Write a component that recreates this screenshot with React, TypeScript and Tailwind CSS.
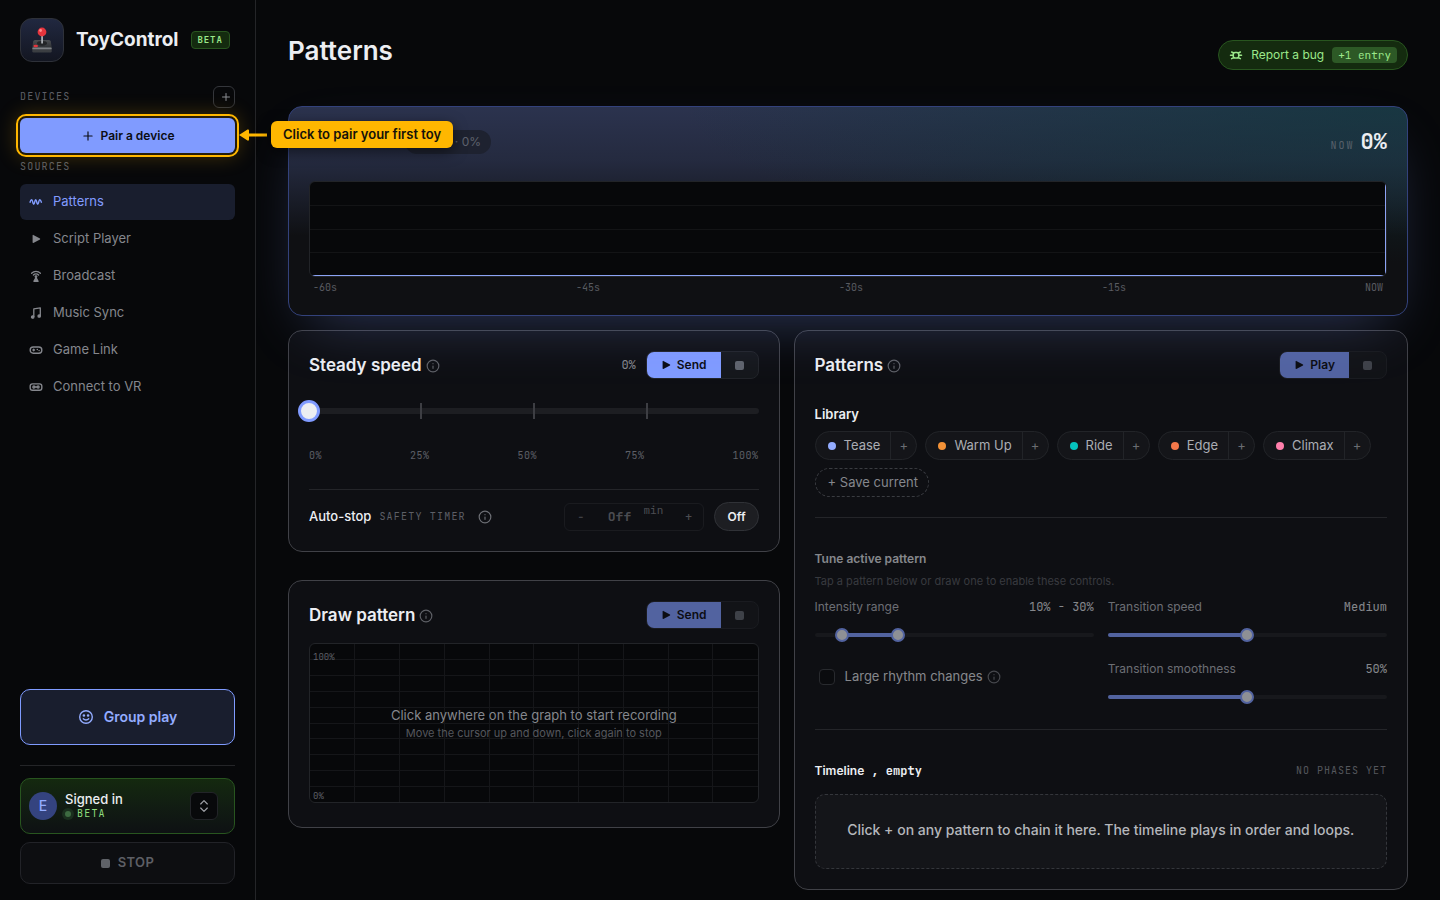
import { useState } from "react";
import type { ReactNode } from "react";
import { ChevronsUpDown, Info, Plus } from "lucide-react";
import clsx from "clsx";

const mono = "font-['JetBrains_Mono','DejaVu_Sans_Mono',monospace]";

function WaveIcon() {
  return (
    <svg viewBox="0 0 14 14" className="h-3.5 w-3.5" fill="none" stroke="currentColor" strokeWidth="1.4" strokeLinecap="round" strokeLinejoin="round">
      <path d="M1 7.200C1.500 5.600 2.100 4.800 2.700 4.800c1 0 1 4.400 2 4.400s1-4.400 2-4.400 1 4.400 2 4.400 1-4.400 2-4.400c.6 0 1.200.8 1.700 2.400" />
    </svg>
  );
}

function PlayIcon({ className }: { className?: string }) {
  return (
    <svg viewBox="0 0 14 14" className={clsx("h-3.5 w-3.5", className)} fill="currentColor">
      <path d="M3.600 3.300c0-.4.400-.600.700-.4l6.700 3.700c.3.200.3.600 0 .8l-6.700 3.600c-.3.200-.7 0-.7-.4z" />
    </svg>
  );
}

function BroadcastIcon() {
  return (
    <svg viewBox="0 0 14 14" className="h-3.5 w-3.5" fill="none" stroke="currentColor" strokeWidth="1.300" strokeLinecap="round" strokeLinejoin="round">
      <path d="M2.600 4.200a6.200 6.200 0 0 1 8.800 0M4.400 6a3.700 3.700 0 0 1 5.200 0" />
      <circle cx="7" cy="7.600" r=".8" fill="currentColor" />
      <path d="M7 8.500 4.900 12.300h4.200zM6 11h2" />
    </svg>
  );
}

function MusicIcon() {
  return (
    <svg viewBox="0 0 14 14" className="h-3.5 w-3.5" fill="none" stroke="currentColor" strokeWidth="1.300" strokeLinejoin="round">
      <path d="M4.800 11V2.900l6.500-1v8" />
      <circle cx="3.700" cy="11" r="1.200" fill="currentColor" />
      <circle cx="10.200" cy="10" r="1.200" fill="currentColor" />
    </svg>
  );
}

function GamepadIcon() {
  return (
    <svg viewBox="0 0 14 14" className="h-3.5 w-3.5" fill="none" stroke="currentColor" strokeWidth="1.400" strokeLinecap="round">
      <rect x="1.200" y="4" width="11.600" height="6.200" rx="3" />
      <path d="M3.900 7h1.600M4.700 6.200v1.600" />
      <path d="M8.200 6.500h.2M10 7.600h.2" />
    </svg>
  );
}

function HeadsetIcon() {
  return (
    <svg viewBox="0 0 14 14" className="h-3.5 w-3.5" fill="none" stroke="currentColor" strokeWidth="1.400">
      <rect x="1.200" y="3.900" width="11.600" height="6.300" rx="2.200" />
      <circle cx="4.900" cy="7" r="1" />
      <circle cx="9.100" cy="7" r="1" />
      <path d="M6 7h2" />
    </svg>
  );
}

function BugIcon() {
  return (
    <svg viewBox="0 0 14 14" className="h-3.5 w-3.5" fill="none" stroke="currentColor" strokeWidth="1.500" strokeLinecap="round">
      <rect x="4.300" y="4.500" width="5.400" height="5.600" rx="1.800" />
      <path d="M1.500 7.300h2.800M9.700 7.300h2.800M2.600 4l2.200 1M11.400 4 9.200 5M2.600 10.700l2.200-1.100M11.400 10.700 9.200 9.600" />
    </svg>
  );
}

function SmileIcon() {
  return (
    <svg viewBox="0 0 16 16" className="h-4 w-4" fill="none" stroke="currentColor" strokeWidth="1.400" strokeLinecap="round">
      <circle cx="8" cy="8" r="6.300" />
      <path d="M5.300 9.800c1.300 1.500 4.100 1.500 5.400 0" />
      <circle cx="5.900" cy="6.500" r=".6" fill="currentColor" />
      <circle cx="10.100" cy="6.500" r=".6" fill="currentColor" />
    </svg>
  );
}

function JoystickLogo() {
  return (
    <svg viewBox="0 0 24 28" className="h-7 w-6">
      <defs>
        <linearGradient id="base" x1="0" y1="0" x2="0" y2="1">
          <stop offset="0" stopColor="#4b4e52" />
          <stop offset="1" stopColor="#2e3134" />
        </linearGradient>
      </defs>
      <path d="M5 14h14q1.500 0 1.800 1.500l1 6.500H2.200l1-6.500Q3.500 14 5 14z" fill="url(#base)" />
      <rect x="2.300" y="21.500" width="19.400" height="5" rx="1.200" fill="#3b3e42" />
      <rect x="2.300" y="21.500" width="19.400" height="1.800" rx=".9" fill="#7d8084" />
      <ellipse cx="12" cy="17.300" rx="5" ry="2.400" fill="#232527" />
      <path d="M11.200 8h1.800v9.500h-1.800z" fill="#a9adb2" />
      <circle cx="12" cy="6" r="4.400" fill="#e5343d" />
      <circle cx="10.600" cy="4.500" r="1.400" fill="#ff8b8b" />
      <ellipse cx="5.700" cy="20" rx="2.300" ry="1.300" fill="#e5343d" />
    </svg>
  );
}

const SOURCES = [
  { label: "Patterns", icon: <WaveIcon />, active: true },
  { label: "Script Player", icon: <PlayIcon /> },
  { label: "Broadcast", icon: <BroadcastIcon /> },
  { label: "Music Sync", icon: <MusicIcon /> },
  { label: "Game Link", icon: <GamepadIcon /> },
  { label: "Connect to VR", icon: <HeadsetIcon /> },
];

const LIBRARY = [
  { name: "Tease", dot: "bg-[#93acff]" },
  { name: "Warm Up", dot: "bg-[#f39237]" },
  { name: "Ride", dot: "bg-[#05c3bd]" },
  { name: "Edge", dot: "bg-[#f4784a]" },
  { name: "Climax", dot: "bg-[#ff7fab]" },
];

function Sidebar() {
  return (
    <aside className="relative z-10 flex w-64 shrink-0 flex-col border-r border-[#242528] px-5 pt-[18px] pb-4">
      {/* Brand */}
      <div className="flex items-center">
        <div className="flex h-11 w-11 items-center justify-center rounded-xl border border-[#2e3139] bg-linear-to-b from-[#212840] to-[#131621]">
          <JoystickLogo />
        </div>
        <span className="ml-3 text-[19px] font-bold text-[#eceef2]">ToyControl</span>
        <span className={clsx(mono, "ml-3 rounded border border-[#28551f] bg-[#142b0f] px-1.5 text-[9px] leading-4 font-bold tracking-widest text-[#9be88a]")}>
          BETA
        </span>
      </div>

      {/* Devices */}
      <div className="mt-6 flex h-[22px] items-center justify-between">
        <h2 className={clsx(mono, "text-[10px] leading-5 tracking-[0.12em] text-[#5d5f66]")}>DEVICES</h2>
        <button aria-label="Add device" className="flex h-[22px] w-[22px] items-center justify-center rounded-md border border-[#34363b] pl-1 text-[#8b8d93]">
          <Plus size={12} />
        </button>
      </div>
      <div className="relative mt-2.5">
        <button className="flex h-[35px] w-full items-center justify-center gap-1.5 rounded-md bg-[#809bff] text-xs font-semibold text-[#0b0d14] shadow-[0_0_20px_4px_rgba(255,183,0,0.22)] outline-2 outline-offset-2 outline-[#ffb700]">
          <Plus size={14} />
          Pair a device
        </button>
        {/* Onboarding hint */}
        <div className="absolute top-[3px] left-full ml-1 flex items-center">
          <svg viewBox="0 0 28 12" className="h-3 w-7 shrink-0" fill="#ffb700">
            <path d="M0 6 8.500.5Q10 0 10 1.500v3h18v3H10v3q0 1.500-1.500 1z" />
          </svg>
          <div className="ml-1 rounded-md bg-[#ffb700] px-3 text-[13px] leading-[27px] font-semibold whitespace-nowrap text-[#14120a] shadow-[0_4px_14px_rgba(0,0,0,0.5)]">
            Click to pair your first toy
          </div>
        </div>
      </div>

      {/* Sources */}
      <h2 className={clsx(mono, "mt-1.5 text-[10px] leading-4 tracking-[0.12em] text-[#5d5f66]")}>SOURCES</h2>
      <nav className="mt-[9px] flex flex-col gap-px">
        {SOURCES.map(({ label, icon, active }) => (
          <a
            key={label}
            href="#"
            className={clsx(
              "flex h-9 items-center gap-2.5 rounded-md px-[9px] text-[13px]",
              active ? "bg-[#191e2e] text-[#829cff]" : "text-[#85878d]",
            )}
          >
            {icon}
            {label}
          </a>
        ))}
      </nav>

      <button className="mt-auto flex h-14 items-center justify-center gap-2.5 rounded-[10px] border border-[#7f9bff] bg-[#191e2e] text-sm font-semibold text-[#93acff]">
        <SmileIcon />
        Group play
      </button>

      <div className="mt-5 border-t border-[#242528] pt-3">
        <div className="flex h-14 items-center rounded-[10px] border border-[#28551f] bg-linear-to-b from-[#14290f] to-[#0e1113] pr-4 pl-2">
          <span className="flex h-7 w-7 items-center justify-center rounded-full bg-[#34437f] text-sm font-medium text-[#93acff]">
            E
          </span>
          <div className="ml-2 flex-1">
            <div className="text-[13px] leading-4 font-medium text-[#eceef2]">Signed in</div>
            <div className={clsx(mono, "flex items-center gap-1.5 text-[10px] leading-[14px] tracking-[0.12em] text-[#8fdd7e]")}>
              <span className="h-1.5 w-1.5 rounded-full bg-[#3d6b41] ring-3 ring-[#1a2f1e]" />
              BETA
            </div>
          </div>
          <button aria-label="Account menu" className="flex h-7 w-7 items-center justify-center rounded-md border border-[#222428] bg-[#08090b] text-[#a0a2a8]">
            <ChevronsUpDown size={16} strokeWidth={1.75} />
          </button>
        </div>
        <button className="mt-2 flex h-[42px] w-full items-center justify-center gap-2 rounded-[10px] border border-[#222328] bg-[#0d0e11] text-[13px] font-semibold tracking-wide text-[#5d5f65]">
          <span className="h-[9px] w-[9px] rounded-xs bg-[#5f6268]" />
          STOP
        </button>
      </div>
    </aside>
  );
}

function LiveChart() {
  return (
    <section className="relative rounded-[14px] border border-[#33427c] bg-[#0f1013] bg-[radial-gradient(ellipse_65%_75%_at_100%_0%,rgba(16,56,60,0.7),transparent),linear-gradient(180deg,rgba(128,155,255,0.25),rgba(128,155,255,0.19)_26%,transparent_62%)] p-5 shadow-[0_24px_60px_-22px_rgba(128,155,255,0.34)]">
      <div className="flex h-[30px] items-center justify-between">
        <span className="ml-24 flex h-6 w-[86px] items-center justify-end rounded-full bg-[#1e2230] px-2.5 text-xs text-[#5e626e]">
          · 0%
        </span>
        <div className={clsx(mono, "flex items-baseline gap-1.5")}>
          <span className="text-[10px] tracking-[0.2em] text-[#58616b]">NOW</span>
          <span className="text-[22px] leading-[30px] font-bold text-[#eceef2]">0%</span>
        </div>
      </div>
      <svg className="mt-6 h-24 w-full rounded-md border border-[#222428] bg-[#07080a]" shapeRendering="crispEdges">
        {["25%", "50%", "75%"].map((y) => (
          <line key={y} x1="0" x2="100%" y1={y} y2={y} stroke="#131416" />
        ))}
        <rect x="0" y="93" width="100%" height="1" fill="#8ba3f5" />
        <rect x="100%" y="0" width="1" height="100%" fill="#8ba3f5" transform="translate(-1 0)" />
      </svg>
      <div className={clsx(mono, "mt-1 flex justify-between px-1 text-[10px] leading-[14px] text-[#595b61]")}>
        {["-60s", "-45s", "-30s", "-15s", "NOW"].map((t) => (
          <span key={t}>{t}</span>
        ))}
      </div>
    </section>
  );
}

function Card({ className, children }: { className?: string; children: ReactNode }) {
  return (
    <section className={clsx("rounded-[14px] border border-[#404147] bg-[#0e0f13] p-5", className)}>
      {children}
    </section>
  );
}

function CardHeader({ title, children }: { title: string; children: ReactNode }) {
  return (
    <div className="flex h-7 items-center">
      <h2 className="text-[17px] leading-7 font-semibold text-[#eceef2]">{title}</h2>
      <Info size={14} className="mt-0.5 ml-1 text-[#5f6167]" />
      <div className="ml-auto flex items-center gap-2.5">{children}</div>
    </div>
  );
}

function Transport({ label, disabled }: { label: string; disabled?: boolean }) {
  return (
    <div className={clsx("flex h-7 overflow-hidden rounded-lg border border-[#222429] bg-[#15171b]", disabled && "opacity-60")}>
      <button disabled={disabled} className="flex items-center gap-1 bg-[#809bff] pr-3.5 pl-3 text-xs font-semibold text-[#0b0d14]">
        <PlayIcon />
        {label}
      </button>
      <button disabled={disabled} aria-label="Stop" className="flex w-[37px] items-center justify-center">
        <span className="h-[9px] w-[9px] rounded-xs bg-[#5f636c]" />
      </button>
    </div>
  );
}

const smallThumb =
  "pointer-events-none absolute inset-y-0 -left-[7px] h-5 w-[calc(100%+14px)] appearance-none bg-transparent [&::-webkit-slider-thumb]:pointer-events-auto [&::-webkit-slider-thumb]:h-3.5 [&::-webkit-slider-thumb]:w-3.5 [&::-webkit-slider-thumb]:appearance-none [&::-webkit-slider-thumb]:rounded-full [&::-webkit-slider-thumb]:border-2 [&::-webkit-slider-thumb]:border-[#809bff] [&::-webkit-slider-thumb]:bg-[#e4e6ec]";

function TuneSlider({ label, value, thumbs }: { label: string; value: string; thumbs: number[] }) {
  const [positions, setPositions] = useState(thumbs);
  const start = positions.length > 1 ? positions[0] : 0;
  const end = positions[positions.length - 1];

  return (
    <div>
      <div className="flex items-center justify-between text-xs leading-5">
        <span className="text-[#abadb3]">{label}</span>
        <span className={clsx(mono, "text-[#d5d7dc]")}>{value}</span>
      </div>
      <div className="relative mt-2 flex h-5 items-center">
        <div className="h-1 w-full rounded-full bg-[#1d1e22]">
          <div
            className="h-1 rounded-full bg-[#809bff]"
            style={{ marginLeft: `${start}%`, width: `${end - start}%` }}
          />
        </div>
        {positions.map((p, i) => (
          <input
            key={i}
            type="range"
            aria-label={label}
            value={p}
            onChange={(e) => setPositions(positions.map((v, j) => (j === i ? Number(e.target.value) : v)))}
            className={smallThumb}
          />
        ))}
      </div>
    </div>
  );
}

function SteadySpeed() {
  const [speed, setSpeed] = useState(0);

  return (
    <Card>
      <CardHeader title="Steady speed">
        <span className={clsx(mono, "text-xs text-[#85878d]")}>{speed}%</span>
        <Transport label="Send" />
      </CardHeader>
      <div className="relative mt-5 flex h-6 items-center">
        <div className="flex h-1.5 w-full items-center justify-evenly rounded-full bg-[#1d1e22]">
          <span className="h-4 w-0.5 bg-[#3d3e43]" />
          <span className="h-4 w-0.5 bg-[#3d3e43]" />
          <span className="h-4 w-0.5 bg-[#3d3e43]" />
        </div>
        <input
          type="range"
          aria-label="Steady speed"
          value={speed}
          onChange={(e) => setSpeed(Number(e.target.value))}
          className="absolute inset-y-0 -left-[11px] h-6 w-[calc(100%+22px)] appearance-none bg-transparent [&::-webkit-slider-thumb]:h-[22px] [&::-webkit-slider-thumb]:w-[22px] [&::-webkit-slider-thumb]:appearance-none [&::-webkit-slider-thumb]:rounded-full [&::-webkit-slider-thumb]:border-3 [&::-webkit-slider-thumb]:border-[#809bff] [&::-webkit-slider-thumb]:bg-[#eceef2]"
        />
      </div>
      <div className={clsx(mono, "mt-6 flex justify-between text-[10px] leading-[18px] tracking-wider text-[#5d5f66]")}>
        {["0%", "25%", "50%", "75%", "100%"].map((t) => (
          <span key={t}>{t}</span>
        ))}
      </div>
      <div className="mt-6 flex items-center border-t border-[#242529] pt-3">
        <span className="text-[13px] font-medium text-[#eceef2]">Auto-stop</span>
        <span className={clsx(mono, "ml-2 text-[10px] tracking-[0.12em] text-[#5d5f66]")}>SAFETY TIMER</span>
        <Info size={14} className="ml-3 text-[#6d6f75]" />
        <div className={clsx(mono, "ml-auto flex h-7 w-[140px] items-center rounded-md border border-[#2c2e33] text-[#a6a8ae] opacity-40")}>
          <button disabled aria-label="Less time" className="w-[30px] text-xs">−</button>
          <span className="w-12 text-center text-[13px] font-bold">Off</span>
          <span className="flex-1 self-start text-[11px] leading-3">min</span>
          <button disabled aria-label="More time" className="w-[30px] text-xs">+</button>
        </div>
        <button className="ml-2.5 h-[29px] rounded-full border border-[#303237] bg-[#1d1e22] px-3 text-xs font-semibold text-[#eceef2]">
          Off
        </button>
      </div>
    </Card>
  );
}

const GRID = ["10%", "20%", "30%", "40%", "50%", "60%", "70%", "80%", "90%"];

function DrawPattern() {
  return (
    <Card className="pb-6">
      <CardHeader title="Draw pattern">
        <Transport label="Send" disabled />
      </CardHeader>
      <div className="relative mt-3.5 h-40 overflow-hidden rounded-md border border-[#222428] bg-[#07080a]">
        <svg className="h-full w-full" shapeRendering="crispEdges" stroke="#151619">
          {GRID.map((p) => (
            <line key={`v${p}`} x1={p} x2={p} y1="0" y2="100%" />
          ))}
          {GRID.map((p) => (
            <line key={`h${p}`} x1="0" x2="100%" y1={p} y2={p} />
          ))}
        </svg>
        <span className={clsx(mono, "absolute top-[7px] left-[3px] text-[9px] leading-3 text-[#5d5f66]")}>100%</span>
        <span className={clsx(mono, "absolute bottom-0 left-[3px] text-[9px] leading-3 text-[#5d5f66]")}>0%</span>
        <div className="absolute inset-0 flex flex-col items-center justify-center text-center">
          <p className="text-[13px] leading-5 text-[#85878d]">Click anywhere on the graph to start recording</p>
          <p className="text-[11px] leading-4 text-[#55575d]">Move the cursor up and down, click again to stop</p>
        </div>
      </div>
    </Card>
  );
}

function PatternsCard() {
  return (
    <Card>
      <CardHeader title="Patterns">
        <Transport label="Play" disabled />
      </CardHeader>

      <h3 className="mt-6 text-[13px] leading-[22px] font-semibold text-[#eceef2]">Library</h3>
      <div className="mt-1.5 flex flex-wrap gap-2">
        {LIBRARY.map(({ name, dot }) => (
          <div key={name} className="flex h-[29px] rounded-full border border-[#222428] bg-[#141519] text-[13px]">
            <button className="flex items-center gap-2 pr-2.5 pl-3 text-[#abadb3]">
              <span className={clsx("h-2 w-2 rounded-full", dot)} />
              {name}
            </button>
            <button aria-label={`Add ${name} to timeline`} className="w-[26px] border-l border-[#222428] text-[#6a6c72]">
              +
            </button>
          </div>
        ))}
        <button className="h-[29px] rounded-full border border-dashed border-[#3a3c41] pr-2.5 pl-3 text-[13px] text-[#85878d]">
          + Save current
        </button>
      </div>

      <div className="mt-5 border-t border-[#242529] pt-[31px]">
        <div className="opacity-60">
          <h3 className="text-xs leading-5 font-semibold text-[#d5d7dc]">Tune active pattern</h3>
          <p className="mt-1 text-[11px] leading-4 text-[#55575d]">
            Tap a pattern below or draw one to enable these controls.
          </p>
          <div className="mt-2 grid grid-cols-2 gap-3.5">
            <TuneSlider label="Intensity range" value="10% - 30%" thumbs={[10, 30]} />
            <TuneSlider label="Transition speed" value="Medium" thumbs={[50]} />
            <div className="flex h-9 items-center pl-1">
              <input
                id="rhythm"
                type="checkbox"
                className="h-4 w-4 appearance-none rounded border border-[#3a3c41] bg-[#08090b]"
              />
              <label htmlFor="rhythm" className="ml-2.5 text-[13px] text-[#d5d7dc]">
                Large rhythm changes
              </label>
              <Info size={14} className="ml-1 text-[#6d6f75]" />
            </div>
            <TuneSlider label="Transition smoothness" value="50%" thumbs={[50]} />
          </div>
        </div>
      </div>

      <div className="mt-5.5 border-t border-[#242529] pt-[31px]">
        <div className="flex items-center justify-between leading-5">
          <h3 className="text-xs leading-5 font-semibold text-[#eceef2]">
            Timeline<span className={mono}> , empty</span>
          </h3>
          <span className={clsx(mono, "text-[10px] tracking-widest text-[#55575d]")}>NO PHASES YET</span>
        </div>
        <p className="mt-[13px] rounded-[10px] border border-dashed border-[#34363b] bg-[#141519] px-4 pt-6 pb-7 text-center text-sm leading-[21px] font-medium text-[#b5b7bc]">
          Click + on any pattern to chain it here. The timeline plays in order and loops.
        </p>
      </div>
    </Card>
  );
}

export default function App() {
  return (
    <div className="flex h-screen overflow-hidden bg-[#07080a] font-[Inter,sans-serif] text-[#eceef2] antialiased">
      <Sidebar />
      <main className="min-w-0 flex-1 overflow-x-hidden overflow-y-auto px-8 pt-8 [scrollbar-width:none]">
        <header className="mb-9 flex items-start justify-between">
          <h1 className="text-[26px] leading-[38px] font-semibold">Patterns</h1>
          <button className="mt-2 flex h-[30px] items-center gap-2 rounded-full border border-[#28551f] bg-[#142b0f] px-2.5 text-xs text-[#9be88a]">
            <BugIcon />
            Report a bug
            <span className={clsx(mono, "rounded-sm bg-[#2d5926] px-1.5 text-[11px] leading-4")}>+1 entry</span>
          </button>
        </header>
        <LiveChart />
        <div className="mt-3.5 grid grid-cols-[4fr_5fr] items-start gap-3.5">
          <div className="flex flex-col gap-7">
            <SteadySpeed />
            <DrawPattern />
          </div>
          <PatternsCard />
        </div>
      </main>
    </div>
  );
}
